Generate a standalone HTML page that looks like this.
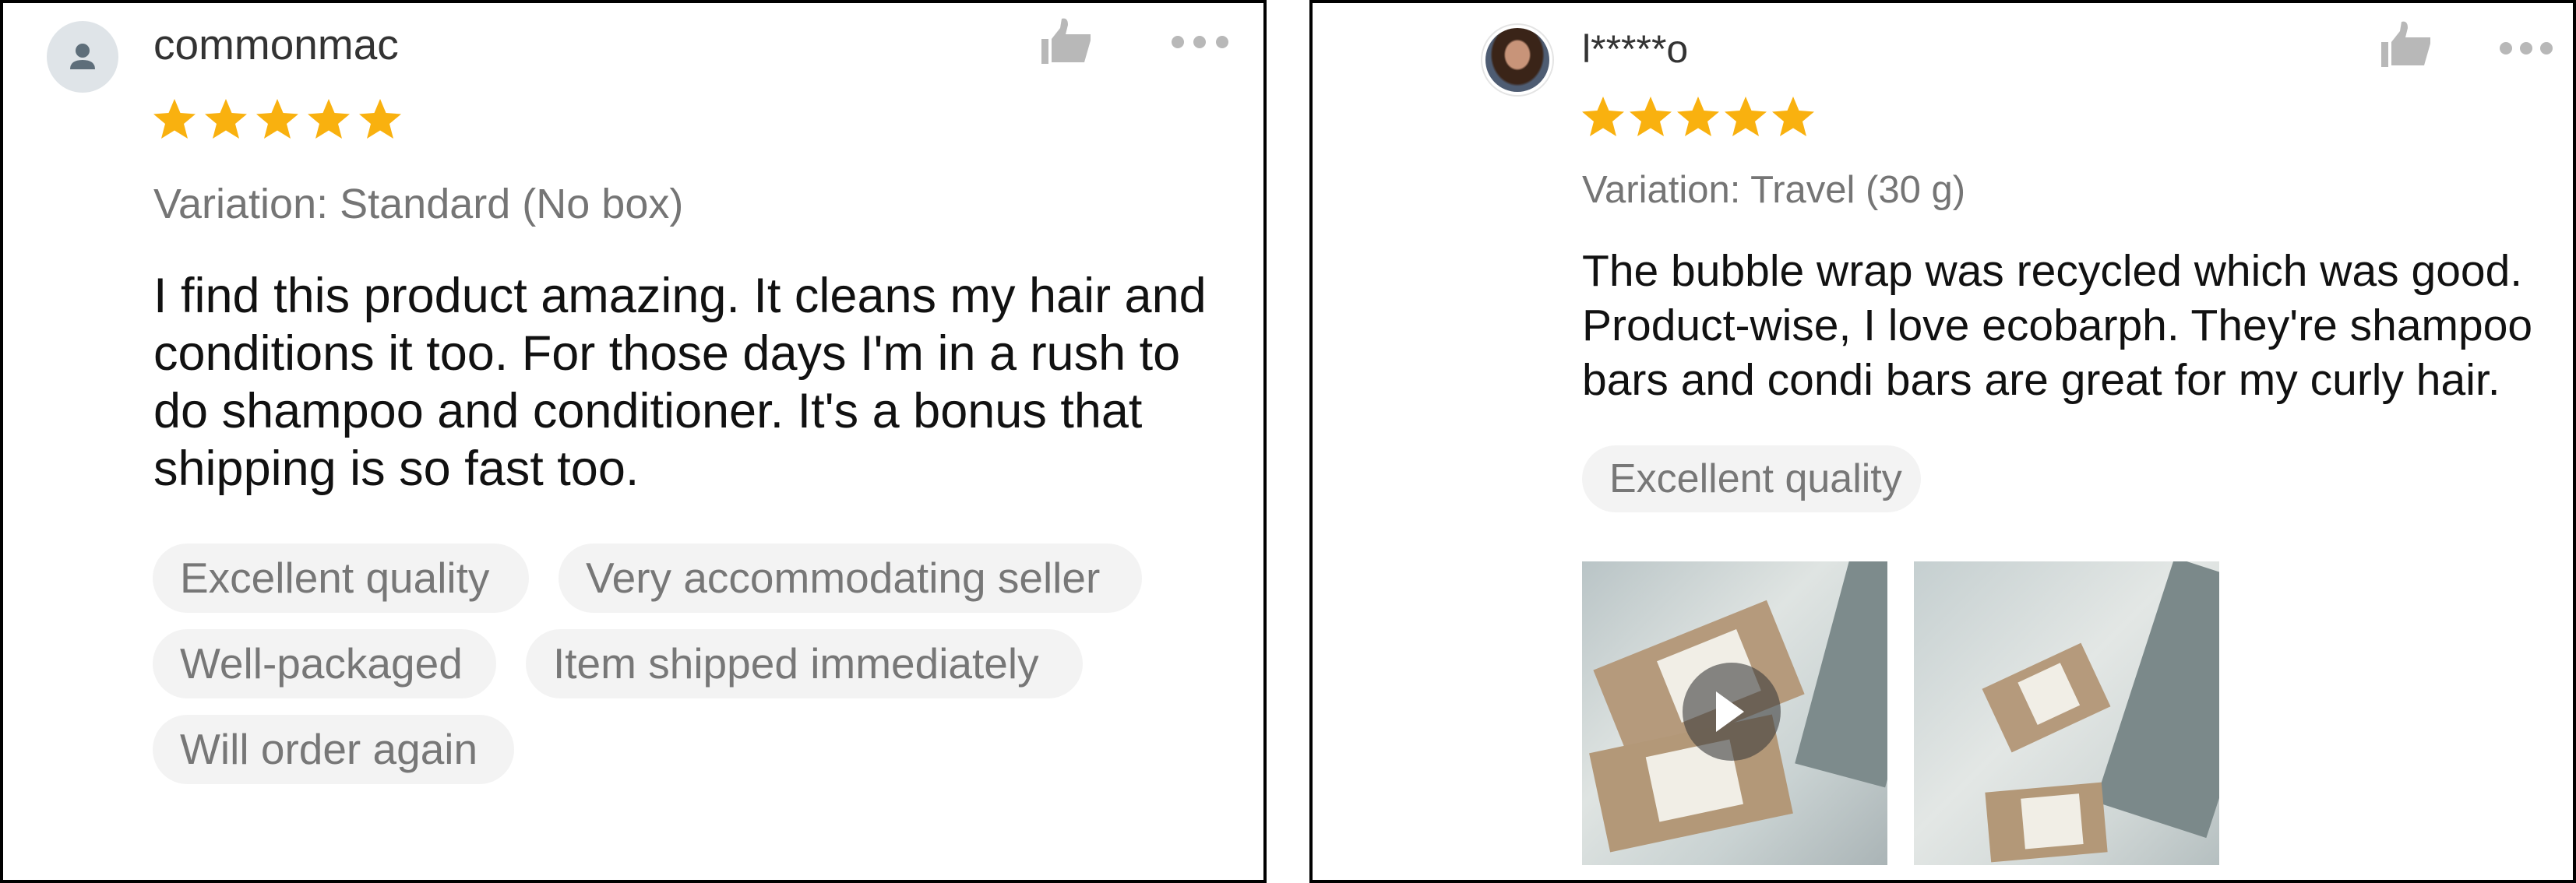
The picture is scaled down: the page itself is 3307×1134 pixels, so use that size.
<!DOCTYPE html>
<html><head><meta charset="utf-8"><style>
body{margin:0;width:3307px;height:1134px;background:#fff;position:relative;overflow:hidden;font-family:"Liberation Sans",Arial,sans-serif}
.card{position:absolute;top:0;height:1134px;border:4px solid #000;box-sizing:border-box;background:#fff}
.a{position:absolute;white-space:nowrap}
.pill{position:absolute;height:89px;border-radius:45px;background:#f3f3f3;color:#777;font-size:55px;line-height:89px;padding:0 35px;box-sizing:border-box;white-space:nowrap}
</style></head><body>
<div class="card" style="left:0;width:1626px"></div>
<div class="card" style="left:1681px;width:1626px"></div>

<!-- left card -->
<div class="a" style="left:60px;top:27px;width:92px;height:92px;border-radius:50%;background:#dfe4e8"></div>
<svg class="a" style="left:60px;top:27px" width="92" height="92" viewBox="0 0 92 92"><circle cx="46" cy="38" r="9" fill="#5e6e7a"/><path d="M30 62 Q30 50 46 50 Q62 50 62 62 Z" fill="#5e6e7a"/></svg>
<div class="a" style="left:197px;top:25px;font-size:55px;color:#333">commonmac</div>
<svg class="a" style="left:196px;top:125px" width="340" height="60" viewBox="0 0 340 60">
<defs><path id="s" d="M28 2 L35.5 20 L55 21.5 L40 34 L45 53 L28 42.5 L11 53 L16 34 L1 21.5 L20.5 20 Z" fill="#f9b10f"/></defs>
<use href="#s" x="0"/><use href="#s" x="66"/><use href="#s" x="132"/><use href="#s" x="198"/><use href="#s" x="264"/></svg>
<svg class="a" style="left:1335px;top:22px" width="70" height="62" viewBox="0 0 70 62"><rect x="2" y="28" width="9" height="32" fill="#b8b8b8"/><path d="M15 58 L15 28 L26 14 L28 2 Q36 0 36 10 L33 22 L65 22 L65 30 L57 58 Z" fill="#b8b8b8"/></svg>
<svg class="a" style="left:1500px;top:44px" width="80" height="22"><circle cx="12" cy="10" r="8" fill="#b8b8b8"/><circle cx="40" cy="10" r="8" fill="#b8b8b8"/><circle cx="69" cy="10" r="8" fill="#b8b8b8"/></svg>
<div class="a" style="left:197px;top:231px;font-size:54px;color:#757575">Variation: Standard (No box)</div>
<div class="a" style="left:197px;top:343px;font-size:63px;line-height:74px;color:#111">I find this product amazing. It cleans my hair and<br>conditions it too. For those days I'm in a rush to<br>do shampoo and conditioner. It's a bonus that<br>shipping is so fast too.</div>
<div class="pill" style="left:196px;top:698px;width:483px">Excellent quality</div>
<div class="pill" style="left:717px;top:698px;width:749px">Very accommodating seller</div>
<div class="pill" style="left:196px;top:808px;width:441px">Well-packaged</div>
<div class="pill" style="left:675px;top:808px;width:715px">Item shipped immediately</div>
<div class="pill" style="left:196px;top:918px;width:464px">Will order again</div>

<!-- right card -->
<div class="a" style="left:1901px;top:30px;width:94px;height:94px;border-radius:50%;background:#fff;border:2px solid #e4e4e4;box-sizing:border-box"></div>
<div class="a" style="left:1907px;top:36px;width:82px;height:82px;border-radius:50%;background:radial-gradient(ellipse at 50% 42%,#c89479 0 26%,#3a2418 30% 55%,#4e5c72 60%)"></div>
<div class="a" style="left:2031px;top:34px;font-size:50px;color:#333">l*****o</div>
<svg class="a" style="left:2030px;top:122px" width="320" height="60" viewBox="0 0 320 60">
<use href="#s" x="0"/><use href="#s" x="61"/><use href="#s" x="122"/><use href="#s" x="183"/><use href="#s" x="244"/></svg>
<svg class="a" style="left:3055px;top:26px" width="70" height="62" viewBox="0 0 70 62"><rect x="2" y="28" width="9" height="32" fill="#b8b8b8"/><path d="M15 58 L15 28 L26 14 L28 2 Q36 0 36 10 L33 22 L65 22 L65 30 L57 58 Z" fill="#b8b8b8"/></svg>
<svg class="a" style="left:3205px;top:52px" width="80" height="22"><circle cx="12" cy="10" r="8" fill="#b8b8b8"/><circle cx="38" cy="10" r="8" fill="#b8b8b8"/><circle cx="64" cy="10" r="8" fill="#b8b8b8"/></svg>
<div class="a" style="left:2031px;top:216px;font-size:49px;color:#757575">Variation: Travel (30 g)</div>
<div class="a" style="left:2031px;top:313px;font-size:57px;line-height:70px;color:#111">The bubble wrap was recycled which was good.<br>Product-wise, I love ecobarph. They're shampoo<br>bars and condi bars are great for my curly hair.</div>
<div class="pill" style="left:2031px;top:572px;width:435px;height:86px;line-height:86px;font-size:52px">Excellent quality</div>

<div class="a" style="left:2031px;top:721px;width:392px;height:390px;background:linear-gradient(135deg,#b9c4c6,#dfe4e2 40%,#c9d2d2 70%,#aab4b6);overflow:hidden">
  <div class="a" style="left:310px;top:-20px;width:120px;height:300px;background:#7d8b8c;transform:rotate(15deg)"></div>
  <div class="a" style="left:30px;top:90px;width:240px;height:130px;background:#b59a7c;transform:rotate(-22deg)"><div class="a" style="left:80px;top:20px;width:110px;height:85px;background:#f1eee6"></div></div>
  <div class="a" style="left:20px;top:220px;width:240px;height:130px;background:#b39878;transform:rotate(-12deg)"><div class="a" style="left:70px;top:20px;width:110px;height:85px;background:#f1eee6"></div></div>
  <div class="a" style="left:129px;top:130px;width:126px;height:126px;border-radius:50%;background:rgba(60,60,60,.6)"></div>
  <svg class="a" style="left:160px;top:163px" width="70" height="60"><path d="M12 4 L48 30 L12 56 Z" fill="#fff"/></svg>
</div>
<div class="a" style="left:2457px;top:721px;width:392px;height:390px;background:linear-gradient(135deg,#c5cfd0,#e3e7e5 45%,#d0d7d6 75%,#b5bfc0);overflow:hidden">
  <div class="a" style="left:280px;top:10px;width:150px;height:330px;background:#7b898a;transform:rotate(18deg)"></div>
  <div class="a" style="left:100px;top:130px;width:140px;height:90px;background:#b59a7c;transform:rotate(-25deg)"><div class="a" style="left:45px;top:12px;width:60px;height:60px;background:#f1eee6"></div></div>
  <div class="a" style="left:95px;top:290px;width:150px;height:90px;background:#b39878;transform:rotate(-5deg)"><div class="a" style="left:45px;top:12px;width:75px;height:65px;background:#f1eee6"></div></div>
</div>
</body></html>
